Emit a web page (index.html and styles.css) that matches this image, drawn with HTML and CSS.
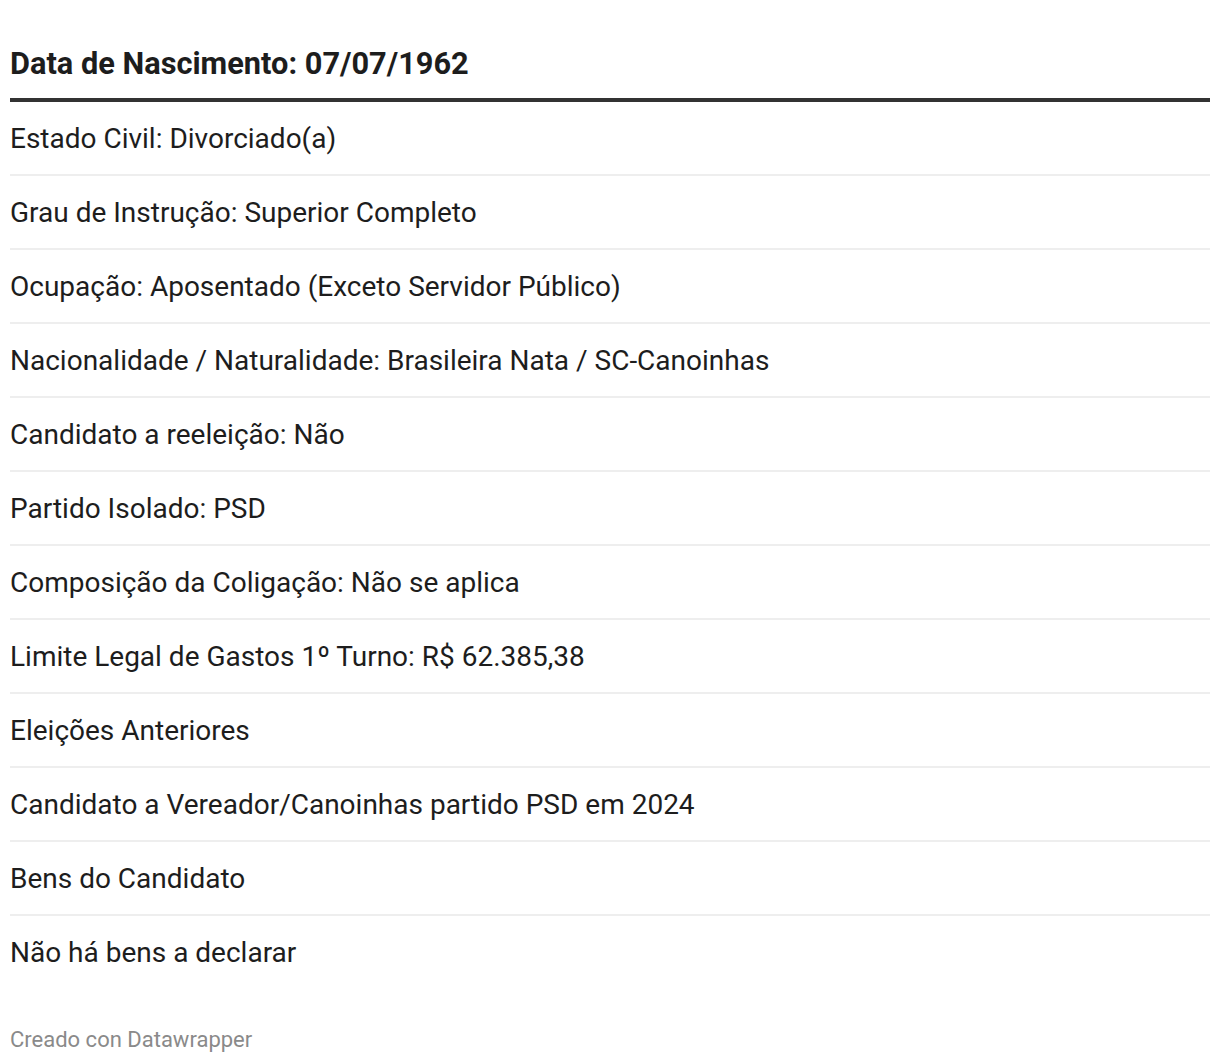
FILE: index.html
```html
<!DOCTYPE html>
<html lang="pt">
<head>
<meta charset="utf-8">
<link rel="stylesheet" href="styles.css">
</head>
<body>
<div class="chart">
  <table class="tbl">
    <thead>
      <tr><th>Data de Nascimento: 07/07/1962</th></tr>
    </thead>
    <tbody>
      <tr><td>Estado Civil: Divorciado(a)</td></tr>
      <tr><td>Grau de Instrução: Superior Completo</td></tr>
      <tr><td>Ocupação: Aposentado (Exceto Servidor Público)</td></tr>
      <tr><td>Nacionalidade / Naturalidade: Brasileira Nata / SC-Canoinhas</td></tr>
      <tr><td>Candidato a reeleição: Não</td></tr>
      <tr><td>Partido Isolado: PSD</td></tr>
      <tr><td>Composição da Coligação: Não se aplica</td></tr>
      <tr><td>Limite Legal de Gastos 1º Turno: R$ 62.385,38</td></tr>
      <tr><td>Eleições Anteriores</td></tr>
      <tr><td>Candidato a Vereador/Canoinhas partido PSD em 2024</td></tr>
      <tr><td>Bens do Candidato</td></tr>
      <tr><td>Não há bens a declarar</td></tr>
    </tbody>
  </table>
  <div class="footer">Creado con Datawrapper</div>
</div>
</body>
</html>
```
FILE: styles.css
```css
html, body {
  margin: 0;
  padding: 0;
  background: #ffffff;
}
.chart {
  padding: 0 10px;
  font-family: Roboto, "Liberation Sans", sans-serif;
  color: #1d1d1d;
}
.tbl {
  width: 1200px;
  border-collapse: collapse;
}
.tbl th {
  text-align: left;
  font-size: 30.75px;
  line-height: 36px;
  font-weight: 700;
  color: #1d1d1d;
  height: 100px;
  padding: 46px 0 0 0;
  vertical-align: top;
  box-sizing: border-box;
  border-bottom: 4px solid #333333;
}
.tbl td {
  font-size: 28px;
  font-weight: 400;
  height: 72px;
  padding: 0;
  border-bottom: 2px solid #eeeeee;
  vertical-align: middle;
}
.tbl tbody tr:last-child td {
  border-bottom: none;
}
.footer {
  margin-top: 39px;
  font-size: 22px;
  color: #8a8a8a;
}
```
